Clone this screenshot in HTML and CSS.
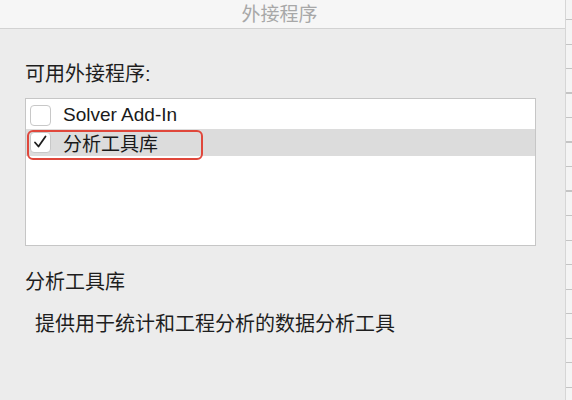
FILE: index.html
```html
<!DOCTYPE html>
<html lang="zh-CN">
<head>
    <meta charset="UTF-8">
    <meta name="viewport" content="width=device-width, initial-scale=1.0">
    <title>外接程序</title>
    <link rel="stylesheet" href="styles.css">
</head>
<body>
    <div class="screen">
        <!-- Add-ins dialog -->
        <div class="window">
            <div class="titlebar">外接程序</div>
            <div class="content">
                <div class="label">可用外接程序:</div>
                <div class="listbox">
                    <div class="row">
                        <span class="checkbox"></span>
                        <span class="row-text">Solver Add-In</span>
                    </div>
                    <div class="row selected">
                        <span class="checkbox">
                            <svg width="21" height="21" viewBox="0 0 21 21">
                                <path d="M5 10.5 L8.5 14.5 L15.5 4.5" fill="none" stroke="#1e1e1e" stroke-width="1.8" stroke-linecap="round" stroke-linejoin="round"/>
                            </svg>
                        </span>
                        <span class="row-text">分析工具库</span>
                        <span class="focus-ring"></span>
                    </div>
                </div>
                <div class="desc-title">分析工具库</div>
                <div class="desc">提供用于统计和工程分析的数据分析工具</div>
            </div>
        </div>
        <!-- spreadsheet behind the dialog -->
        <div class="sheet-edge"></div>
    </div>
</body>
</html>
```

FILE: styles.css
```css
body {
    margin: 0;
    padding: 0;
    font-family: "Liberation Sans", "Noto Sans CJK SC", sans-serif;
    color: #222;
    background-color: #ececec;
}
.screen {
    display: flex;
    width: 572px;
    height: 400px;
    overflow: hidden;
}
.window {
    width: 565px;
    background-color: #ececec;
    border-right: 1px solid #d6d6d6;
}
.titlebar {
    height: 28px;
    line-height: 30px;
    text-align: center;
    font-size: 19px;
    color: #a8a8a8;
    background-color: #f6f6f6;
    border-bottom: 1px solid #d2d2d2;
    padding-right: 6px;
}
.content {
    padding: 33px 0 0 25px;
}
.label {
    font-size: 20px;
    line-height: 24px;
    color: #1e1e1e;
}
.listbox {
    margin-top: 12px;
    width: 509px;
    height: 144px;
    padding-top: 2px;
    box-sizing: content-box;
    background-color: #fff;
    border: 1px solid #c6c6c6;
}
.row {
    position: relative;
    display: flex;
    align-items: center;
    height: 27px;
    padding-left: 4px;
}
.row:first-child {
    height: 28px;
}
.row.selected {
    background-color: #dcdcdc;
}
.checkbox {
    width: 19px;
    height: 19px;
    border: 1px solid #c8c8c8;
    border-radius: 4px;
    background-color: #fff;
    flex-shrink: 0;
}
.checkbox svg {
    display: block;
    margin: -1px 0 0 -1px;
}
.row-text {
    margin-left: 12px;
    font-size: 19px;
    color: #1a1a1a;
}
.focus-ring {
    position: absolute;
    left: 1px;
    top: 1px;
    width: 172px;
    height: 26px;
    border: 2px solid #e0473b;
    border-radius: 6px;
}
.desc-title {
    margin-top: 24px;
    font-size: 20px;
    line-height: 24px;
    color: #1e1e1e;
}
.desc {
    margin-top: 18px;
    padding-left: 10px;
    font-size: 20px;
    line-height: 24px;
    color: #1e1e1e;
}
.sheet-edge {
    flex: 1;
    background-color: #f4f4f4;
    background-image: repeating-linear-gradient(to bottom, transparent 0, transparent 23px, #c4c4c4 23px, #c4c4c4 24.5px);
    background-position: 0 -4px;
}
```
